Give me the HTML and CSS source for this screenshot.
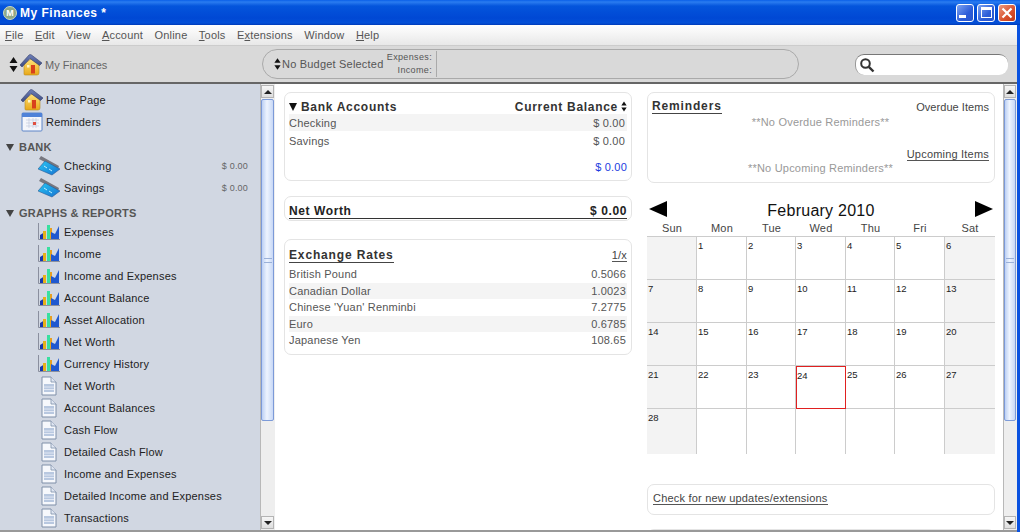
FILE: index.html
```html
<!DOCTYPE html>
<html lang="en">
<head>
<meta charset="utf-8">
<title>My Finances</title>
<link rel="stylesheet" href="styles.css">
</head>
<body>
<svg class="defs" width="0" height="0">
  <defs>
    <linearGradient id="roof" x1="0" y1="0" x2="0" y2="1"><stop offset="0" stop-color="#6f80b8"/><stop offset="1" stop-color="#3c4a80"/></linearGradient>
    <linearGradient id="wall" x1="0" y1="0" x2="0" y2="1"><stop offset="0" stop-color="#ffe27a"/><stop offset="1" stop-color="#e8a818"/></linearGradient>
    <linearGradient id="card" x1="0" y1="0" x2="1" y2="1"><stop offset="0" stop-color="#28c8f4"/><stop offset="1" stop-color="#1670d0"/></linearGradient>
    <symbol id="i-house" viewBox="0 0 24 22">
      <path d="M5 10 L5 20 Q5 21 6 21 L18 21 Q20 21 20 19 L20 10 L12 5 Z" fill="url(#wall)" stroke="#b98a20" stroke-width=".6"/>
      <path d="M1 11 L10 1 Q11 0 12.500 1 L23 9 L20.500 11.500 L11 4.500 L3 13 Z" fill="url(#roof)" stroke="#36406c" stroke-width=".6"/>
      <rect x="12" y="11" width="4" height="8.500" fill="#d8401c"/>
      <rect x="8" y="11" width="2.500" height="2.500" fill="#fff6c8"/>
    </symbol>
    <symbol id="i-cal" viewBox="0 0 22 20">
      <rect x="1" y="1" width="20" height="18" rx="1" fill="#f4f6fb" stroke="#5f86c8"/>
      <rect x="1" y="1" width="20" height="4" fill="#4f82d8"/>
      <path d="M5 8h13M5 11h13M5 14h13M8 6v10M12 6v10M15 6v10" stroke="#c2cade" stroke-width=".7"/>
      <rect x="12" y="10" width="3" height="3" fill="#e05040"/>
    </symbol>
    <symbol id="i-bank" viewBox="0 0 22 20">
      <path d="M1 3 L3 0 L21 10 L20 13 L2 3.500 Z" fill="#77777f"/>
      <path d="M0 13 L7 5 L22 13 L14 19 Z" fill="url(#card)" stroke="#2a5a96" stroke-width=".6"/>
      <path d="M6 10l3 2M11 13l3 2" stroke="#bff0ff" stroke-width="1"/>
    </symbol>
    <symbol id="i-graph" viewBox="0 0 22 18">
      <path d="M.5 0V16.500H22" fill="none" stroke="#8a8f9e" stroke-width="1"/>
      <path d="M2 16 L2 12 L7 9 L7 16Z" fill="#1838b0"/>
      <rect x="5" y="8" width="3" height="8" fill="#e6b018"/>
      <rect x="9" y="2" width="3" height="14" fill="#38e0a0"/>
      <rect x="12" y="5" width="2" height="11" fill="#e8a020"/>
      <path d="M13 16 L13 9 L17 11 L21 3 L21 16Z" fill="#1f58d0"/>
    </symbol>
    <symbol id="i-doc" viewBox="0 0 16 20">
      <path d="M1 1H10L15 6V19H1Z" fill="#f6f8fc" stroke="#7e8fa8"/>
      <path d="M10 1V6H15" fill="#dfe6f2" stroke="#7e8fa8" stroke-width=".8"/>
      <rect x="3" y="8" width="10" height="8" fill="#b8c8e0"/>
      <path d="M3 11h10M3 13.500h10" stroke="#f2f5fa" stroke-width=".7"/>
    </symbol>
    <symbol id="i-updown" viewBox="0 0 9 15">
      <path d="M4.500 0 L8.500 6 H.5Z M.5 9 H8.500 L4.500 15Z" fill="#111"/>
    </symbol>
  </defs>
</svg>

<div class="window">
  <header class="titlebar">
    <span class="app-logo">M</span>
    <span class="app-title">My Finances *</span>
    <div class="win-buttons">
      <span class="win-btn"><span class="min-mark"></span></span>
      <span class="win-btn"><span class="max-mark"></span></span>
      <span class="win-btn win-close">
        <svg width="12" height="12" viewBox="0 0 12 12"><path d="M1.500 1.500L10.500 10.500M10.500 1.500L1.500 10.500" stroke="#fff" stroke-width="2.200"/></svg>
      </span>
    </div>
  </header>

  <nav class="menubar">
    <span class="menu-item"><u>F</u>ile</span>
    <span class="menu-item"><u>E</u>dit</span>
    <span class="menu-item">View</span>
    <span class="menu-item"><u>A</u>ccount</span>
    <span class="menu-item">Online</span>
    <span class="menu-item"><u>T</u>ools</span>
    <span class="menu-item">E<u>x</u>tensions</span>
    <span class="menu-item">Window</span>
    <span class="menu-item"><u>H</u>elp</span>
  </nav>

  <div class="toolbar">
    <div class="file-picker">
      <svg class="updown" width="9" height="15"><use href="#i-updown"/></svg>
      <svg width="24" height="22"><use href="#i-house"/></svg>
      <span class="file-name">My Finances</span>
    </div>
    <div class="budget-pill">
      <svg class="updown-small" width="7" height="12"><use href="#i-updown"/></svg>
      <span class="budget-name">No Budget Selected</span>
      <div class="budget-labels"><span>Expenses:</span><span>Income:</span></div>
      <div class="budget-bar"></div>
    </div>
    <div class="search-box">
      <svg width="16" height="16" viewBox="0 0 16 16"><circle cx="6.500" cy="6.500" r="4.300" fill="none" stroke="#333" stroke-width="2"/><path d="M9.800 9.800L14.500 14.500" stroke="#333" stroke-width="2.400"/></svg>
    </div>
  </div>

  <div class="main">
    <aside class="sidebar">
      <div class="side-list">
        <div class="row row-top"><svg width="24" height="22"><use href="#i-house"/></svg><span>Home Page</span></div>
        <div class="row row-top"><svg width="22" height="20"><use href="#i-cal"/></svg><span>Reminders</span></div>
        <div class="section section-bank"><i class="tri"></i>BANK</div>
        <div class="row row-sub"><svg width="22" height="20"><use href="#i-bank"/></svg><span class="grow">Checking</span><small>$ 0.00</small></div>
        <div class="row row-sub"><svg width="22" height="20"><use href="#i-bank"/></svg><span class="grow">Savings</span><small>$ 0.00</small></div>
        <div class="section section-graphs"><i class="tri"></i>GRAPHS &amp; REPORTS</div>
        <div class="row row-sub"><svg width="22" height="18"><use href="#i-graph"/></svg><span>Expenses</span></div>
        <div class="row row-sub"><svg width="22" height="18"><use href="#i-graph"/></svg><span>Income</span></div>
        <div class="row row-sub"><svg width="22" height="18"><use href="#i-graph"/></svg><span>Income and Expenses</span></div>
        <div class="row row-sub"><svg width="22" height="18"><use href="#i-graph"/></svg><span>Account Balance</span></div>
        <div class="row row-sub"><svg width="22" height="18"><use href="#i-graph"/></svg><span>Asset Allocation</span></div>
        <div class="row row-sub"><svg width="22" height="18"><use href="#i-graph"/></svg><span>Net Worth</span></div>
        <div class="row row-sub"><svg width="22" height="18"><use href="#i-graph"/></svg><span>Currency History</span></div>
        <div class="row row-doc"><svg width="16" height="20"><use href="#i-doc"/></svg><span>Net Worth</span></div>
        <div class="row row-doc"><svg width="16" height="20"><use href="#i-doc"/></svg><span>Account Balances</span></div>
        <div class="row row-doc"><svg width="16" height="20"><use href="#i-doc"/></svg><span>Cash Flow</span></div>
        <div class="row row-doc"><svg width="16" height="20"><use href="#i-doc"/></svg><span>Detailed Cash Flow</span></div>
        <div class="row row-doc"><svg width="16" height="20"><use href="#i-doc"/></svg><span>Income and Expenses</span></div>
        <div class="row row-doc"><svg width="16" height="20"><use href="#i-doc"/></svg><span>Detailed Income and Expenses</span></div>
        <div class="row row-doc"><svg width="16" height="20"><use href="#i-doc"/></svg><span>Transactions</span></div>
        <div class="row row-doc"><svg width="16" height="20"><use href="#i-doc"/></svg></div>
      </div>
    </aside>
    <div class="scrollbar scrollbar-left">
      <div class="sb-btn"><i class="sb-up"></i></div>
      <div class="sb-thumb"><i class="grip"></i></div>
      <div class="sb-track"></div>
      <div class="sb-btn"><i class="sb-down"></i></div>
    </div>

    <main class="content">
      <div class="col">
        <section class="card card-bank">
          <div class="card-head">
            <span class="head-title"><i class="tri tri-black"></i>Bank Accounts</span>
            <span class="head-title">Current Balance <svg width="6" height="11"><use href="#i-updown"/></svg></span>
          </div>
          <div class="line shaded"><span>Checking</span><span>$ 0.00</span></div>
          <div class="line"><span>Savings</span><span>$ 0.00</span></div>
          <div class="line total"><span>$ 0.00</span></div>
        </section>
        <section class="card card-net">
          <div class="net-row"><span>Net Worth</span><span>$ 0.00</span></div>
        </section>
        <section class="card card-rates">
          <div class="card-head rates-head">
            <span class="head-title linked">Exchange Rates</span>
            <span class="link-small">1/x</span>
          </div>
          <div class="rate"><span>British Pound</span><span>0.5066</span></div>
          <div class="rate shaded"><span>Canadian Dollar</span><span>1.0023</span></div>
          <div class="rate"><span>Chinese 'Yuan' Renminbi</span><span>7.2775</span></div>
          <div class="rate shaded"><span>Euro</span><span>0.6785</span></div>
          <div class="rate"><span>Japanese Yen</span><span>108.65</span></div>
        </section>
      </div>

      <div class="col">
        <section class="card card-reminders">
          <div class="card-head">
            <span class="head-title linked">Reminders</span>
            <span class="rem-link">Overdue Items</span>
          </div>
          <div class="rem-note">**No Overdue Reminders**</div>
          <div class="rem-upcoming"><span class="link-small">Upcoming Items</span></div>
          <div class="rem-note">**No Upcoming Reminders**</div>
        </section>

        <section class="calendar">
          <div class="cal-head">
            <svg width="18" height="16" viewBox="0 0 18 16"><path d="M0 8L18 0V16Z" fill="#000"/></svg>
            <span class="cal-title">February 2010</span>
            <svg width="18" height="16" viewBox="0 0 18 16"><path d="M18 8L0 0V16Z" fill="#000"/></svg>
          </div>
          <div class="cal-grid cal-days">
            <span>Sun</span><span>Mon</span><span>Tue</span><span>Wed</span><span>Thu</span><span>Fri</span><span>Sat</span>
          </div>
          <div class="cal-grid cal-cells">
            <div class="cell wk"></div><div class="cell">1</div><div class="cell">2</div><div class="cell">3</div><div class="cell">4</div><div class="cell">5</div><div class="cell wk">6</div>
            <div class="cell wk">7</div><div class="cell">8</div><div class="cell">9</div><div class="cell">10</div><div class="cell">11</div><div class="cell">12</div><div class="cell wk">13</div>
            <div class="cell wk">14</div><div class="cell">15</div><div class="cell">16</div><div class="cell">17</div><div class="cell">18</div><div class="cell">19</div><div class="cell wk">20</div>
            <div class="cell wk">21</div><div class="cell">22</div><div class="cell">23</div><div class="cell today">24</div><div class="cell">25</div><div class="cell">26</div><div class="cell wk">27</div>
            <div class="cell wk last">28</div><div class="cell last"></div><div class="cell last"></div><div class="cell last"></div><div class="cell last"></div><div class="cell last"></div><div class="cell wk last"></div>
          </div>
        </section>

        <section class="card card-updates"><span class="link-small">Check for new updates/extensions</span></section>
        <section class="card card-stub"></section>
      </div>
    </main>
    <div class="scrollbar scrollbar-right">
      <div class="sb-btn"><i class="sb-up"></i></div>
      <div class="sb-thumb"><i class="grip"></i></div>
      <div class="sb-track"></div>
      <div class="sb-btn"><i class="sb-down"></i></div>
    </div>
  </div>
</div>
</body>
</html>
```
FILE: styles.css
```css
* { box-sizing: border-box; }
html, body { margin: 0; padding: 0; height: 100%; overflow: hidden; background: #fff; }
body { font-family: "Liberation Sans", Arial, sans-serif; font-size: 11px; color: #333; letter-spacing: .2px; }
.defs { position: absolute; }
svg { display: block; flex: none; }

.window { width: 1020px; height: 532px; display: flex; flex-direction: column; background: #0a52e0; padding: 0 3px 0 0; overflow: hidden; }

.titlebar { height: 25px; margin-right: -3px; flex: none; display: flex; align-items: center; padding: 0 4px 0 3px; background: linear-gradient(#0a5fe8 0, #2a7cf0 2px, #0455dc 6px, #0048d4 18px, #0450d8 23px, #003ab8 25px); color: #fff; }
.app-logo { width: 14px; height: 14px; border-radius: 50%; background: #8fa888; color: #fff; font-size: 9px; font-weight: bold; letter-spacing: 0; border: 1px solid #c8d8c0; margin-right: 3px; display: flex; align-items: center; justify-content: center; }
.app-title { font-size: 12px; font-weight: bold; letter-spacing: .5px; flex: 1; }
.win-buttons { display: flex; gap: 3px; }
.win-btn { width: 18px; height: 18px; border-radius: 3px; border: 1px solid #fff; background: linear-gradient(135deg, #7ea4f2, #2c5cd8 60%, #2a56cc); display: flex; align-items: center; justify-content: center; }
.win-close { background: linear-gradient(135deg, #ec9a80, #d8502c 60%, #c03a18); }
.min-mark { width: 7px; height: 3px; background: #fff; margin: 8px 6px 0 0; }
.max-mark { width: 11px; height: 11px; border: 1px solid #fff; border-top-width: 3px; }

.menubar { height: 21px; flex: none; display: flex; align-items: center; padding: 0 0 0 5px; gap: 11.400px; color: #555; background: linear-gradient(#fff, #e8e8e8); border-bottom: 1px solid #ccc; }
.menu-item u { text-underline-offset: 1px; }

.toolbar { height: 38px; flex: none; background: #d9d9d9; border-bottom: 2px solid #666; display: flex; align-items: center; }
.file-picker { width: 262px; padding: 1px 0 0 9px; display: flex; align-items: center; flex: none; }
.file-picker .updown { margin-right: 1px; }
.file-name { margin-left: 2px; color: #666; font-size: 11px; letter-spacing: 0; }
.budget-pill { width: 537px; height: 30px; border: 1px solid #aaa; border-radius: 15px; display: flex; align-items: center; padding-left: 11px; flex: none; }
.updown-small { margin-right: 1px; }
.budget-name { color: #555; width: 104px; flex: none; white-space: nowrap; }
.budget-labels { width: 50px; flex: none; display: flex; flex-direction: column; align-items: flex-end; font-size: 9px; line-height: 13px; color: #555; padding-right: 4px; letter-spacing: .35px; }
.budget-bar { height: 26px; width: 1px; background: #aaa; }
.search-box { width: 153px; height: 21px; margin-left: 56px; background: #fff; border-radius: 9px; border-top: 1px solid #777; border-left: 1px solid #999; display: flex; align-items: center; padding: 1px 0 0 3px; }

.main { flex: 1; min-height: 0; display: flex; background: #fff; border-bottom: 2px solid #999; }
.sidebar { width: 260px; flex: none; background: #d1d7e2; overflow: hidden; color: #222; }
.side-list { padding-top: 5px; }
.row { height: 22px; display: flex; align-items: center; padding-right: 12px; }
.row-top { padding-left: 20px; }
.row-top svg { width: 24px; margin-right: 2px; }
.row-sub { padding-left: 38px; }
.row-sub svg { margin-right: 4px; }
.row-doc { padding-left: 41px; }
.row-doc svg { margin-right: 7px; }
.grow { flex: 1; }
.row small { font-size: 9px; color: #666; }
.section { display: flex; align-items: center; font-weight: bold; color: #555; padding-left: 6px; height: 14px; }
.section-bank { margin-top: 7px; margin-bottom: 1px; }
.section-graphs { margin-top: 7px; margin-bottom: 1px; }
.tri { width: 0; height: 0; display: block; border-left: 4.500px solid transparent; border-right: 4.500px solid transparent; border-top: 7px solid #444; margin-right: 5px; }
.tri-black { border-top-color: #111; border-left-width: 4px; border-right-width: 4px; border-top-width: 8px; margin-right: 1px; }

.scrollbar { width: 15px; flex: none; display: flex; flex-direction: column; background: #eee; border-left: 1px solid #b8b8b8; padding: 1px 1px 1px 0; }
.scrollbar-right { width: 14px; }
.sb-btn { height: 13px; flex: none; background: linear-gradient(#f6f6f6, #dedede); border: 1px solid #b4b4b4; display: flex; align-items: center; justify-content: center; }
.sb-up { border-left: 4px solid transparent; border-right: 4px solid transparent; border-bottom: 4px solid #222; }
.sb-down { border-left: 4px solid transparent; border-right: 4px solid transparent; border-top: 4px solid #222; }
.sb-thumb { height: 322px; flex: none; margin-top: 1px; border: 1px solid #7c9ad8; border-radius: 2px; background: linear-gradient(90deg, #bcd0f4, #eef4fe 45%, #c8d8f6); display: flex; align-items: center; justify-content: center; }
.grip { width: 8px; height: 5px; border-top: 1px solid #9ab0d8; border-bottom: 1px solid #9ab0d8; }
.sb-track { flex: 1; }

.content { flex: 1; min-width: 0; overflow: hidden; display: flex; padding: 8px 8px 0 9px; gap: 15px; }
.col { display: flex; flex-direction: column; flex: none; width: 348px; }

.card { border: 1px solid #e4e4e4; border-radius: 7px; padding: 0 4px; background: #fff; flex: none; }
.card-bank { height: 89px; padding-top: 6px; }
.card-head { display: flex; justify-content: space-between; align-items: center; height: 15px; }
.head-title { font-size: 12px; font-weight: bold; color: #333; display: inline-flex; align-items: center; gap: 3px; letter-spacing: .7px; }
.linked { border-bottom: 1px solid #444; line-height: 14px; letter-spacing: .85px; }
.line { height: 17px; display: flex; justify-content: space-between; align-items: center; padding-right: 2px; color: #555; }
.shaded { background: #f4f4f4; }
.shaded + .line { margin-top: 1px; }
.total { justify-content: flex-end; color: #1c3ce0; margin-top: 9px; padding-right: 0; }
.card-net { height: 25px; margin-top: 15px; padding-top: 7px; }
.net-row { display: flex; justify-content: space-between; font-size: 12px; font-weight: bold; color: #222; border-bottom: 1px solid #333; height: 15px; line-height: 14px; letter-spacing: .6px; }
.card-rates { height: 116px; margin-top: 18px; padding-top: 8px; }
.rates-head { margin-bottom: 3px; }
.link-small { border-bottom: 1px solid #555; color: #444; line-height: 12px; }
.rate { height: 16.500px; display: flex; justify-content: space-between; align-items: center; padding-right: 1px; color: #555; }

.card-reminders { height: 91px; padding-top: 6px; padding-right: 5px; }
.rem-link { color: #444; letter-spacing: .05px; }
.rem-note { text-align: center; color: #999; height: 17px; line-height: 17px; }
.rem-upcoming { text-align: right; margin-top: 17px; height: 14px; }
.rem-upcoming + .rem-note { margin-top: -2px; }

.calendar { margin-top: 16px; }
.cal-head { display: flex; justify-content: space-between; align-items: center; height: 20px; padding: 0 2px; }
.cal-title { font-size: 16px; color: #111; letter-spacing: .25px; margin-top: 3px; }
.cal-grid { display: grid; grid-template-columns: 50px 50px 49px 50px 49px 50px 50px; }
.cal-days { height: 17px; align-items: center; text-align: center; color: #444; }
.cal-cells { border-top: 1px solid #ccc; }
.cell { height: 43px; border-bottom: 1px solid #ccc; border-right: 1px solid #ccc; padding: 3px 0 0 1px; font-size: 9.500px; color: #222; letter-spacing: 0; }
.cell:nth-child(7n) { border-right: 0; }
.wk { background: #f3f3f3; }
.today { border: 1px solid #e02020; padding: 3px 0 0 0; }
.last { height: 45px; border-bottom: 0; }

.card-updates { height: 31px; margin-top: 30px; padding: 7px 0 0 5px; }
.card-stub { height: 20px; margin-top: 14px; }
```
